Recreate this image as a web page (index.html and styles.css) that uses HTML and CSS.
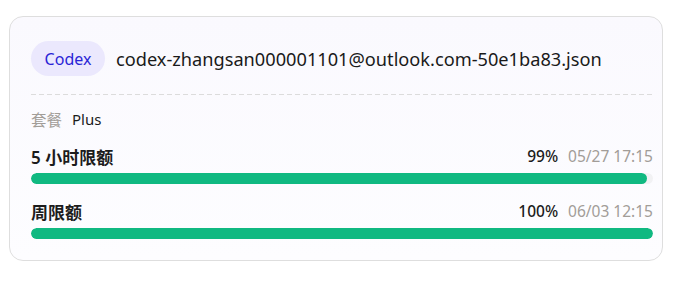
FILE: index.html
```html
<!DOCTYPE html>
<html lang="zh">
<head>
<meta charset="utf-8">
<link rel="stylesheet" href="styles.css">
</head>
<body>
<div class="card">
  <div class="header">
    <span class="badge">Codex</span>
    <span class="title">codex-zhangsan000001101@outlook.com-50e1ba83.json</span>
  </div>
  <div class="divider"></div>
  <div class="plan"><span class="plan-label">套餐</span><span class="plan-value">Plus</span></div>
  <div class="quota">
    <div class="quota-head">
      <span class="quota-name">5 小时限额</span>
      <span class="quota-meta"><span class="pct">99%</span><span class="time">05/27 17:15</span></span>
    </div>
    <div class="track"><div class="fill" style="width:99%"></div></div>
  </div>
  <div class="quota">
    <div class="quota-head">
      <span class="quota-name">周限额</span>
      <span class="quota-meta"><span class="pct">100%</span><span class="time">06/03 12:15</span></span>
    </div>
    <div class="track"><div class="fill" style="width:100%"></div></div>
  </div>
</div>
</body>
</html>
```
FILE: styles.css
```css
* { box-sizing: border-box; }
html, body { margin: 0; background: #ffffff; }
body {
  padding: 16px 27px 0 9px;
  font-family: "Noto Sans", "Noto Sans CJK SC", sans-serif;
  color: #1c1c1c;
}
.card {
  width: 654px;
  height: 245px;
  border: 1px solid #dedede;
  border-radius: 14px;
  background: linear-gradient(180deg, #faf9fe 0%, #fdfdff 100%);
  padding: 24px 9px 0 21px;
}
.header {
  display: flex;
  align-items: center;
  gap: 11px;
  height: 35px;
}
.badge {
  display: inline-flex;
  align-items: center;
  justify-content: center;
  height: 35px;
  width: 74px;
  border-radius: 18px;
  background: #ebe8fd;
  color: #2a24d6;
  font-size: 16px;
}
.title {
  font-size: 18.2px;
  color: #1a1a1a;
  white-space: nowrap;
}
.divider {
  margin-top: 18px;
  height: 1px;
  width: 623px;
  background: repeating-linear-gradient(90deg, #dcdcdc 0 5px, transparent 5px 8px);
}
.plan {
  margin-top: 14px;
  display: flex;
  align-items: center;
  gap: 10px;
  font-size: 15px;
  height: 20px;
}
.plan-label { color: #a29d98; font-size: 15.5px; }
.plan-value { color: #1c1c1c; }
.quota { width: 622px; }
.quota-head {
  display: flex;
  justify-content: space-between;
  align-items: center;
  margin-top: 16px;
  height: 22px;
}
.quota-name { font-size: 17px; font-weight: 600; }
.quota-meta { display: flex; gap: 10px; font-size: 15.5px; }
.pct { font-weight: 500; color: #1c1c1c; }
.time { color: #a29d98; }
.track {
  margin-top: 6px;
  height: 11px;
  border-radius: 6px;
  background: #f2f2f4;
  overflow: hidden;
}
.fill {
  height: 100%;
  background: #10b981;
  border-radius: 6px;
}
```
